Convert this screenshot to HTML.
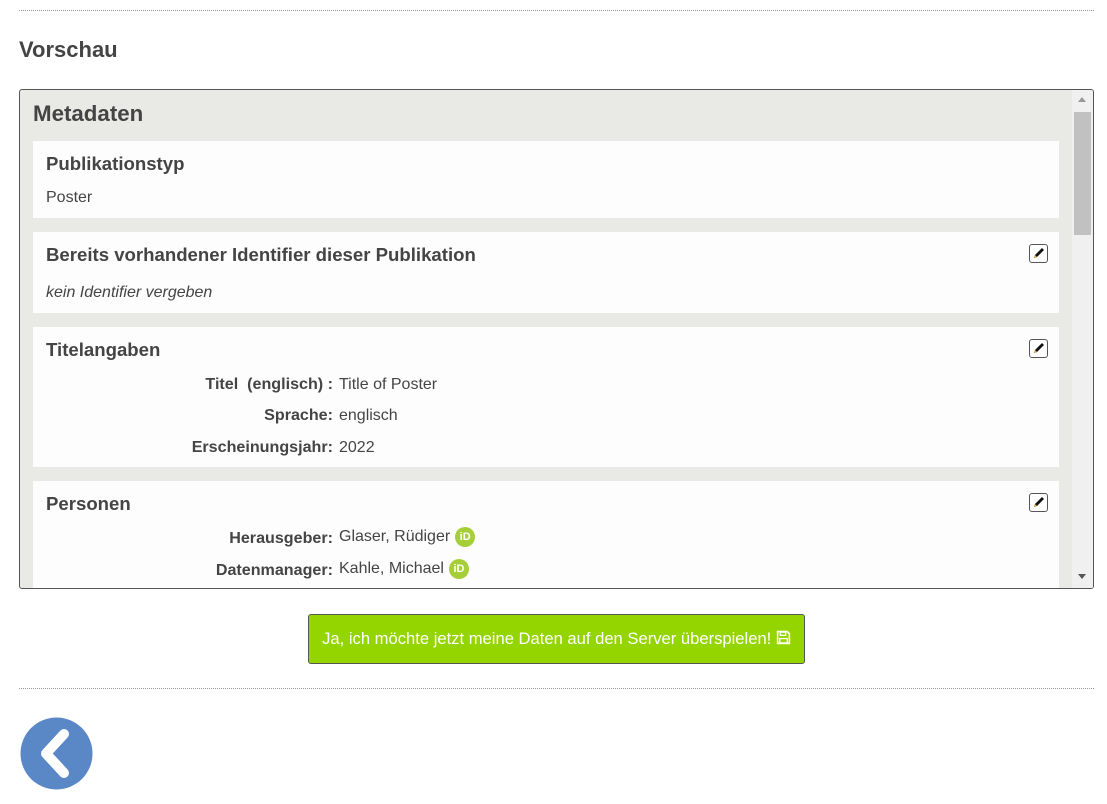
<!DOCTYPE html>
<html><head><meta charset="utf-8"><style>
body{margin:0;width:1107px;height:804px;background:#fff;font-family:"Liberation Sans",Arial,sans-serif;color:#444;position:relative;overflow:hidden}
.hr{position:absolute;left:19px;width:1075px;border-top:1px dotted #999}
.abs{position:absolute}
.box{position:absolute;left:19px;top:89px;width:1073px;height:498px;border:1px solid #555;border-radius:3px;background:#e9e9e5;overflow:hidden}
.card{position:absolute;left:13px;width:1026px;background:#fdfdfd}
.h{position:absolute;left:13px;font-weight:bold;font-size:18.6px;color:#444;white-space:nowrap}
.t{position:absolute;font-size:16px;color:#444}
.lab{position:absolute;right:726px;font-weight:bold;font-size:16.1px;text-align:right;white-space:nowrap}
.val{position:absolute;left:306px;font-size:16px;white-space:nowrap}
.pen{position:absolute;right:11px;width:17px;height:17px;border:1px solid #555;border-radius:3px;background:#fff}
.orc{display:inline-block;width:20px;height:20px;border-radius:50%;background:#a6ce39;color:#fff;font-size:11px;font-weight:bold;text-align:center;line-height:20px;vertical-align:middle;margin-left:5px}
.sb{position:absolute;right:0;top:0;width:21px;height:498px;background:#f0f0f0}
</style></head><body>
<div class="hr" style="top:10px"></div>
<div class="abs" style="left:19px;top:37px;font-size:22px;font-weight:bold;color:#444">Vorschau</div>
<div class="box">
 <div class="abs" style="left:13px;top:11px;font-size:22.3px;font-weight:bold;color:#444">Metadaten</div>
 <div class="card" style="top:51px;height:77px">
  <div class="h" style="top:12px">Publikationstyp</div>
  <div class="t" style="left:13px;top:48px">Poster</div>
 </div>
 <div class="card" style="top:142px;height:81px">
  <div class="h" style="top:12px">Bereits vorhandener Identifier dieser Publikation</div>
  <div class="pen" style="top:12px"><svg width="17" height="17" viewBox="0 0 17 17"><path d="M4 13l1-3 7-7 2 2-7 7z" fill="#111"/><path d="M4 13l1-3 2 2z" fill="#e8a33b"/></svg></div>
  <div class="t" style="left:13px;top:52px;font-style:italic">kein Identifier vergeben</div>
 </div>
 <div class="card" style="top:237px;height:140px">
  <div class="h" style="top:12px">Titelangaben</div>
  <div class="pen" style="top:12px"><svg width="17" height="17" viewBox="0 0 17 17"><path d="M4 13l1-3 7-7 2 2-7 7z" fill="#111"/><path d="M4 13l1-3 2 2z" fill="#e8a33b"/></svg></div>
  <div class="lab" style="top:48px">Titel&nbsp; (englisch) :</div><div class="val" style="top:49px">Title of Poster</div>
  <div class="lab" style="top:79px">Sprache:</div><div class="val" style="top:80px">englisch</div>
  <div class="lab" style="top:111px">Erscheinungsjahr:</div><div class="val" style="top:112px">2022</div>
 </div>
 <div class="card" style="top:391px;height:120px">
  <div class="h" style="top:12px">Personen</div>
  <div class="pen" style="top:12px"><svg width="17" height="17" viewBox="0 0 17 17"><path d="M4 13l1-3 7-7 2 2-7 7z" fill="#111"/><path d="M4 13l1-3 2 2z" fill="#e8a33b"/></svg></div>
  <div class="lab" style="top:48px">Herausgeber:</div><div class="val" style="top:46px">Glaser, Rüdiger<span class="orc">iD</span></div>
  <div class="lab" style="top:80px">Datenmanager:</div><div class="val" style="top:78px">Kahle, Michael<span class="orc">iD</span></div>
 </div>
 <div class="sb">
  <div class="abs" style="left:6px;top:7px;width:0;height:0;border-left:4px solid transparent;border-right:4px solid transparent;border-bottom:5px solid #999"></div>
  <div class="abs" style="left:2px;top:22px;width:17px;height:123px;background:#c1c1c1"></div>
  <div class="abs" style="left:6px;top:484px;width:0;height:0;border-left:4px solid transparent;border-right:4px solid transparent;border-top:5px solid #555"></div>
 </div>
</div>
<div class="abs" style="left:308px;top:614px;width:495px;height:48px;background:#94d500;border:1px solid #555;border-radius:3px;color:#fff;font-size:16.6px;text-align:center;line-height:48px;white-space:nowrap">Ja, ich möchte jetzt meine Daten auf den Server überspielen! <svg width="15" height="15" viewBox="0 0 14 14" style="vertical-align:-1px"><path d="M1.5 1.5h9l2 2v9h-11z" fill="none" stroke="#fff" stroke-width="1.5"/><rect x="4" y="2" width="5" height="3" fill="none" stroke="#fff" stroke-width="1.2"/><rect x="3.5" y="8" width="7" height="4" fill="none" stroke="#fff" stroke-width="1.2"/></svg></div>
<div class="hr" style="top:688px"></div>
<svg class="abs" style="left:20px;top:717px" width="73" height="73" viewBox="0 0 73 73"><circle cx="36.5" cy="36.5" r="36" fill="#5a87c5"/><path d="M44 17L26 36.5 44 56" fill="none" stroke="#fff" stroke-width="10" stroke-linecap="round" stroke-linejoin="round"/></svg>
</body></html>
